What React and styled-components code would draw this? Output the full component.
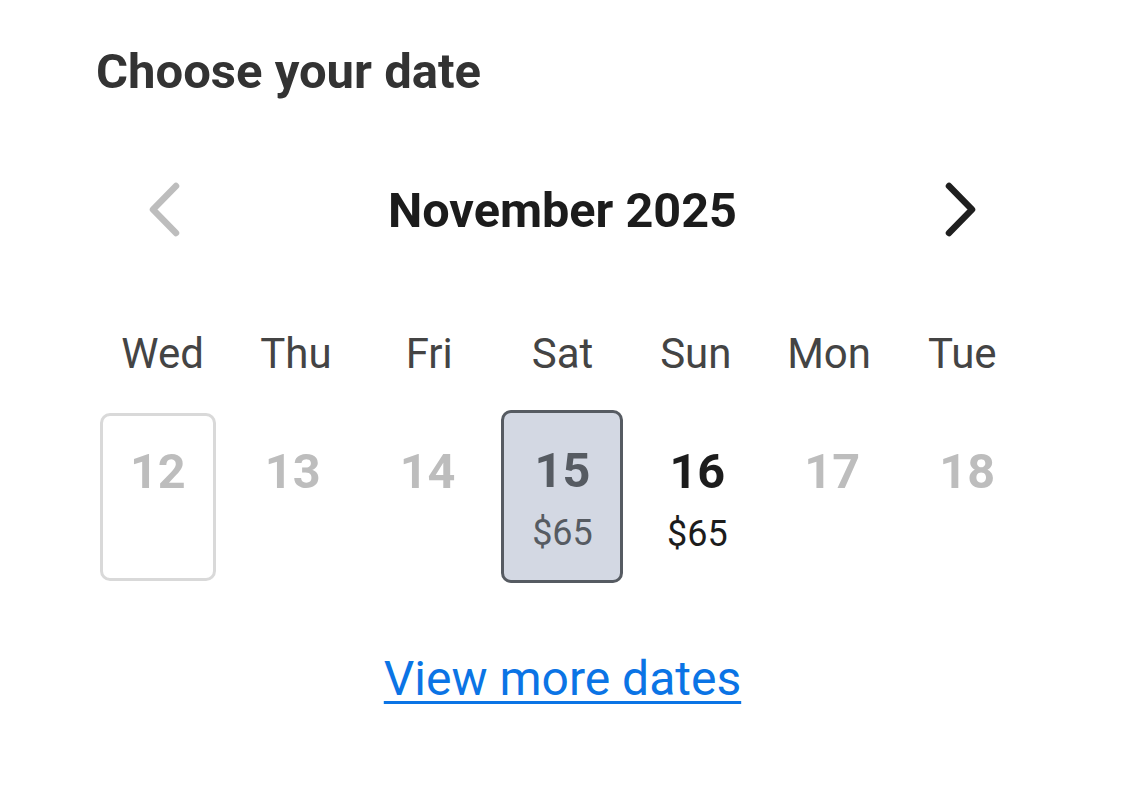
import React from "react";
import styled, { createGlobalStyle } from "styled-components";

const Global = createGlobalStyle`
  html, body { margin: 0; padding: 0; background: #ffffff; }
  body { font-family: Roboto, "Noto Sans", sans-serif; }
`;

const Page = styled.div`
  width: 1125px;
  box-sizing: border-box;
  padding: 40px 96px 0 96px;
`;

const Title = styled.h2`
  margin: 0;
  font-size: 49px;
  font-weight: 700;
  color: #333333;
  line-height: 64px;
`;

const MonthBar = styled.div`
  display: grid;
  grid-template-columns: 133px 1fr 133px;
  align-items: center;
  margin-top: 76px;
  height: 60px;
`;

const NavButton = styled.button`
  border: none;
  background: none;
  padding: 0;
  display: flex;
  align-items: center;
  justify-content: center;
  color: ${(p) => (p.$disabled ? "#bdbdbd" : "#1f1f1f")};
  cursor: pointer;
`;

const Month = styled.div`
  text-align: center;
  font-size: 48.6px;
  font-weight: 700;
  color: #1c1c1c;
`;

const WeekHeader = styled.div`
  display: grid;
  grid-template-columns: repeat(7, 1fr);
  margin-top: 89px;
`;

const Weekday = styled.div`
  text-align: center;
  font-size: 42px;
  color: #444444;
  line-height: 50px;
`;

const DaysRow = styled.div`
  display: grid;
  grid-template-columns: repeat(7, 1fr);
  margin: 0 -5.6px;
`;

const DayCell = styled.div`
  display: flex;
  justify-content: center;
  padding-top: 34px;
`;

const DayBox = styled.div`
  box-sizing: border-box;
  width: ${(p) => (p.$selected ? "122px" : "116px")};
  height: ${(p) => (p.$selected ? "173px" : "168px")};
  border-radius: 10px;
  border: ${(p) =>
    p.$selected ? "3px solid #565b62" : p.$outlined ? "3px solid #d9d9d9" : "3px solid transparent"};
  background: ${(p) => (p.$selected ? "#d3d8e3" : "transparent")};
  display: flex;
  flex-direction: column;
  align-items: center;
  padding-top: ${(p) => (p.$selected ? "30px" : "28px")};
  margin-top: ${(p) => (p.$selected ? "-3px" : "0")};
  color: ${(p) => p.$color};
`;

const DayNum = styled.div`
  font-size: 48.6px;
  font-weight: 700;
  line-height: 56px;
`;

const Price = styled.div`
  font-size: 36px;
  line-height: 46px;
  margin-top: 11px;
`;

const LinkRow = styled.div`
  display: flex;
  justify-content: center;
  margin-top: 67px;
`;

const MoreLink = styled.a`
  font-size: 48px;
  color: #0b74e5;
  text-decoration: underline;
  text-decoration-thickness: 3px;
  text-underline-offset: 6px;
  cursor: pointer;
`;

const Chevron = ({ dir }) => (
  <svg width="40" height="60" viewBox="0 0 40 60" fill="none">
    <path
      d={dir === "left" ? "M33 6 L10 29.5 L33 53" : "M6 6 L29 29.5 L6 53"}
      stroke="currentColor"
      strokeWidth="6.5"
      strokeLinecap="round"
      strokeLinejoin="round"
    />
  </svg>
);

const weekdays = ["Wed", "Thu", "Fri", "Sat", "Sun", "Mon", "Tue"];
const days = [
  { n: 12, outlined: true, color: "#bdbdbd" },
  { n: 13, color: "#bdbdbd" },
  { n: 14, color: "#bdbdbd" },
  { n: 15, selected: true, price: "$65", color: "#565b62" },
  { n: 16, price: "$65", color: "#1c1c1c" },
  { n: 17, color: "#bdbdbd" },
  { n: 18, color: "#bdbdbd" },
];

export default function App() {
  return (
    <Page>
      <Global />
      <Title>Choose your date</Title>
      <MonthBar>
        <NavButton $disabled aria-label="Previous month">
          <Chevron dir="left" />
        </NavButton>
        <Month>November 2025</Month>
        <NavButton aria-label="Next month">
          <Chevron dir="right" />
        </NavButton>
      </MonthBar>
      <WeekHeader>
        {weekdays.map((w) => (
          <Weekday key={w}>{w}</Weekday>
        ))}
      </WeekHeader>
      <DaysRow>
        {days.map((d) => (
          <DayCell key={d.n}>
            <DayBox $selected={d.selected} $outlined={d.outlined} $color={d.color}>
              <DayNum>{d.n}</DayNum>
              {d.price && <Price>{d.price}</Price>}
            </DayBox>
          </DayCell>
        ))}
      </DaysRow>
      <LinkRow>
        <MoreLink>View more dates</MoreLink>
      </LinkRow>
    </Page>
  );
}
